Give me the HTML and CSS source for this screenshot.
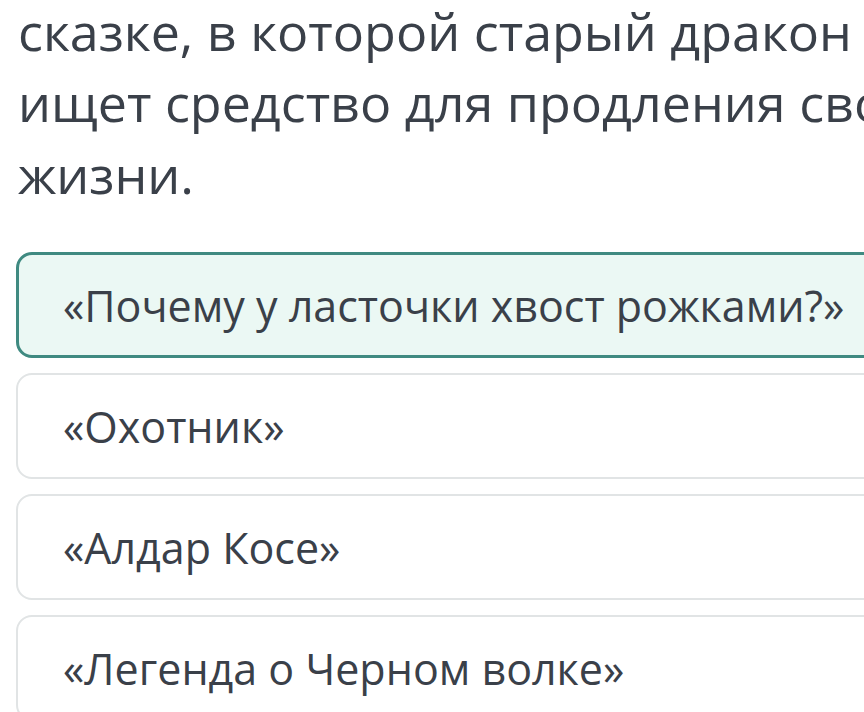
FILE: index.html
```html
<!DOCTYPE html>
<html lang="ru">

<head>
    <meta charset="UTF-8">
    <meta name="viewport" content="width=device-width, initial-scale=1.0">
    <title>Вопрос</title>
    <link rel="stylesheet" href="styles.css">
</head>

<body>
    <div class="question">
        <p class="question-text">сказке, в которой старый дракон<br>ищет средство для продления своей<br>жизни.</p>
    </div>

    <div class="answers">
        <div class="answer selected">«Почему у ласточки хвост рожками?»</div>
        <div class="answer">«Охотник»</div>
        <div class="answer">«Алдар Косе»</div>
        <div class="answer">«Легенда о Черном волке»</div>
    </div>
</body>

</html>
```

FILE: styles.css
```css
html,
body {
    margin: 0;
    padding: 0;
    overflow: hidden;
    background: #ffffff;
}

body {
    font-family: "Open Sans", "Noto Sans", sans-serif;
    color: #3a4049;
    width: 1000px;
}

.question {
    padding: 0 18px;
}

.question-text {
    margin: -5.5px 0 0;
    font-size: 52px;
    line-height: 71.5px;
    white-space: nowrap;
}

.answers {
    display: flex;
    flex-direction: column;
    gap: 15px;
    margin-top: 43px;
    padding-left: 16px;
}

.answer {
    display: flex;
    align-items: center;
    height: 106px;
    box-sizing: border-box;
    padding-left: 45px;
    border: 2px solid #e1e4e5;
    border-radius: 16px;
    background: #ffffff;
    font-size: 43px;
    white-space: nowrap;
}

.answer.selected {
    border: 3px solid #3f8a81;
    background: #ebf8f4;
    padding-left: 44px;
}
```
